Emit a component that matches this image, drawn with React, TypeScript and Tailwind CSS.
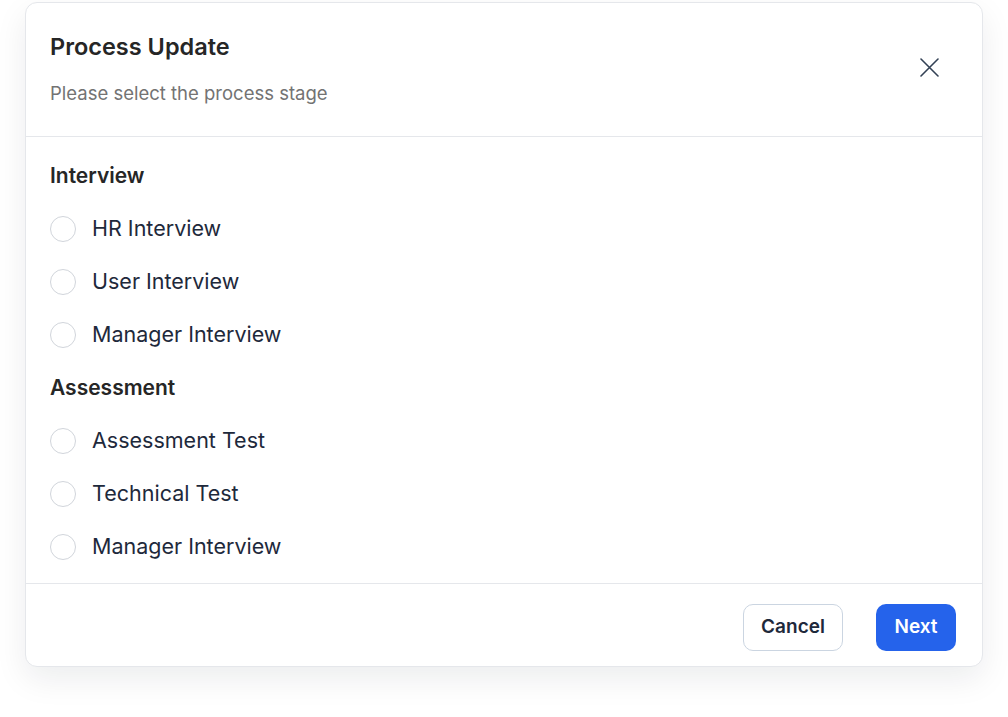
import React from "react";

const groups = [
  { title: "Interview", items: ["HR Interview", "User Interview", "Manager Interview"] },
  { title: "Assessment", items: ["Assessment Test", "Technical Test", "Manager Interview"] },
];

export default function App() {
  return (
    <div className="w-[1008px] h-[717px] bg-white font-['Inter',sans-serif] pt-[2px] pl-[25px]">
      <div className="w-[958px] bg-white border border-[#e5e7eb] rounded-[12px] shadow-[0_12px_32px_rgba(15,23,42,0.08)]">
        {/* Header */}
        <div className="flex items-start justify-between pl-[24px] pr-[43px] pt-[30px] pb-[31px] border-b border-[#e5e7eb]">
          <div className="flex flex-col gap-[20px]">
            <h2 className="text-[23.5px] leading-[28px] font-semibold text-[#262626]">Process Update</h2>
            <p className="text-[18.5px] leading-[24px] text-[#737373]">Please select the process stage</p>
          </div>
          <button className="mt-[25px] w-[19px] h-[19px] flex items-center justify-center text-[#334155]">
            <svg width="19" height="19" viewBox="0 0 19 19" fill="none" stroke="currentColor" strokeWidth="1.6" strokeLinecap="round">
              <path d="M1 1L18 18M18 1L1 18" />
            </svg>
          </button>
        </div>

        {/* Body */}
        <div className="pl-[24px] pt-[12px] pb-[10px] border-b border-[#e5e7eb]">
          {groups.map((g, gi) => (
            <div key={gi}>
              <div className="h-[53px] flex items-center text-[21px] font-semibold text-[#262626]">{g.title}</div>
              {g.items.map((it, i) => (
                <label key={i} className="h-[53px] flex items-center gap-[16px] cursor-pointer">
                  <span className="w-[26px] h-[26px] rounded-full border-[1.5px] border-[#d1d5db] bg-white" />
                  <span className="text-[21.5px] text-[#1e293b]">{it}</span>
                </label>
              ))}
            </div>
          ))}
        </div>

        {/* Footer */}
        <div className="flex justify-end items-center gap-[33px] pr-[26px] pt-[20px] pb-[15px]">
          <button className="w-[100px] h-[47px] rounded-[10px] border border-[#cbd5e1] bg-white text-[19px] font-semibold text-[#1e293b]">
            Cancel
          </button>
          <button className="w-[80px] h-[47px] rounded-[10px] bg-[#2563eb] text-[19px] font-semibold text-white">
            Next
          </button>
        </div>
      </div>
    </div>
  );
}
